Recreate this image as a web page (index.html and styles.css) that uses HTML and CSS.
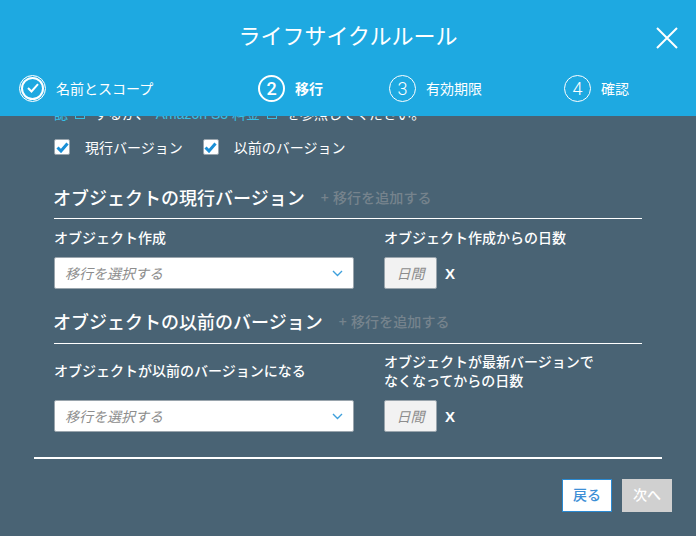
FILE: index.html
```html
<!DOCTYPE html>
<html lang="ja">

<head>
    <meta charset="UTF-8">
    <title>ライフサイクルルール</title>
    <link rel="stylesheet" href="styles.css">
</head>

<body>
    <div class="modal">
        <!-- ヘッダー -->
        <div class="header">
            <div class="title">ライフサイクルルール</div>
            <svg class="close" width="22" height="22" viewBox="0 0 22 22">
                <path d="M1 1L21 21M21 1L1 21" stroke="#fff" stroke-width="2" fill="none" />
            </svg>
            <div class="steps">
                <div class="step">
                    <span class="circle done">
                        <svg width="12" height="10" viewBox="0 0 12 10">
                            <path d="M1 5L4.5 8.5L11 1.2" stroke="#fff" stroke-width="2" fill="none" />
                        </svg>
                    </span>
                    <span class="step-label">名前とスコープ</span>
                </div>
                <div class="step active">
                    <span class="circle">2</span>
                    <span class="step-label">移行</span>
                </div>
                <div class="step">
                    <span class="circle">3</span>
                    <span class="step-label">有効期限</span>
                </div>
                <div class="step">
                    <span class="circle">4</span>
                    <span class="step-label">確認</span>
                </div>
            </div>
        </div>

        <div class="content">
            <p class="note"><a>認<i class="ext"></i></a><span class="note-text">するか、</span><a>Amazon S3 料金<i class="ext"></i></a><span class="note-text">を参照してください。</span></p>

            <div class="checks">
                <label class="check"><span class="box"><svg width="13" height="11" viewBox="0 0 13 11">
                            <path d="M1.5 5.5L5 9L11.5 1.5" stroke="#1a8fd6" stroke-width="3" fill="none" />
                        </svg></span>現行バージョン</label>
                <label class="check"><span class="box"><svg width="13" height="11" viewBox="0 0 13 11">
                            <path d="M1.5 5.5L5 9L11.5 1.5" stroke="#1a8fd6" stroke-width="3" fill="none" />
                        </svg></span>以前のバージョン</label>
            </div>

            <!-- 現行バージョン -->
            <div class="section-head first">
                <h2 class="section-title">オブジェクトの現行バージョン</h2>
                <span class="add-link">+ 移行を追加する</span>
            </div>
            <div class="fields fields-top">
                <div class="field-label">オブジェクト作成</div>
                <div class="field-label">オブジェクト作成からの日数</div>
                <div class="select">
                    <span>移行を選択する</span>
                    <svg width="11" height="7" viewBox="0 0 11 7">
                        <path d="M1 1L5.5 5.5L10 1" stroke="#3fa0dc" stroke-width="1.4" fill="none" />
                    </svg>
                </div>
                <div class="days-row">
                    <div class="days">日間</div>
                    <span class="remove">X</span>
                </div>
            </div>

            <!-- 以前のバージョン -->
            <div class="section-head">
                <h2 class="section-title">オブジェクトの以前のバージョン</h2>
                <span class="add-link">+ 移行を追加する</span>
            </div>
            <div class="fields fields-bottom">
                <div class="field-label label-single">オブジェクトが以前のバージョンになる</div>
                <div class="field-label">オブジェクトが最新バージョンで<br>なくなってからの日数</div>
                <div class="select">
                    <span>移行を選択する</span>
                    <svg width="11" height="7" viewBox="0 0 11 7">
                        <path d="M1 1L5.5 5.5L10 1" stroke="#3fa0dc" stroke-width="1.4" fill="none" />
                    </svg>
                </div>
                <div class="days-row">
                    <div class="days">日間</div>
                    <span class="remove">X</span>
                </div>
            </div>
        </div>

        <!-- フッター -->
        <div class="footer">
            <button class="button back-button">戻る</button>
            <button class="button next-button">次へ</button>
        </div>
    </div>
</body>

</html>
```

FILE: styles.css
```css
* {
    margin: 0;
    padding: 0;
    box-sizing: border-box;
    font-family: "Noto Sans CJK JP", "Liberation Sans", sans-serif;
}

body {
    width: 696px;
    height: 536px;
    overflow: hidden;
    background-color: #496374;
}

.modal {
    height: 536px;
    overflow: hidden;
    color: #fff;
}

.header {
    position: relative;
    z-index: 2;
    height: 116px;
    background-color: #1ea9e1;
}

.title {
    padding-top: 18px;
    height: 74px;
    font-size: 22px;
    line-height: 32px;
    text-align: center;
}

.close {
    position: absolute;
    top: 27px;
    right: 18px;
}

.steps {
    display: grid;
    grid-template-columns: 239px 131px 175px auto;
    padding-left: 19px;
}

.step {
    display: flex;
    align-items: center;
    height: 28px;
    font-size: 14px;
}

.circle {
    display: flex;
    width: 27px;
    height: 27px;
    margin-right: 10px;
    align-items: center;
    justify-content: center;
    border: 1px solid #fff;
    border-radius: 50%;
    font-size: 18px;
    font-family: "Roboto", "Liberation Sans", sans-serif;
    font-weight: 300;
}

.active .circle {
    border-width: 2px;
    font-weight: 500;
}

.active .step-label {
    font-weight: 700;
}

.done {
    box-shadow: inset 0 0 0 1px #1ea9e1, inset 0 0 0 3px #fff;
}

.content {
    padding: 0 54px;
}

.note {
    margin-top: -13px;
    font-size: 14px;
    line-height: 20px;
    white-space: nowrap;
}

.note a {
    color: #35c0e8;
    font-family: "Liberation Sans", "Noto Sans CJK JP", sans-serif;
}

.note-text {
    margin: 0 6px 0 9px;
}

.ext {
    display: inline-block;
    width: 10px;
    height: 9px;
    margin-left: 7px;
    border: 1px solid #35c0e8;
}

.checks {
    display: flex;
    margin-top: 13px;
    height: 20px;
    align-items: center;
}

.check {
    display: flex;
    align-items: center;
    margin-right: 20px;
    font-size: 14px;
}

.box {
    display: flex;
    width: 16px;
    height: 16px;
    margin-right: 15px;
    align-items: center;
    justify-content: center;
    background-color: #fff;
    border: 1px solid #9aa5ad;
    border-radius: 2px;
}

.section-head {
    display: flex;
    height: 38px;
    margin-top: 17px;
    align-items: center;
    border-bottom: 1px solid #fff;
    padding-bottom: 7px;
}

.section-head.first {
    height: 37px;
    margin-top: 25px;
}

.section-title {
    margin: 0 16px 0 -1px;
    font-size: 18px;
    line-height: 24px;
    font-weight: 500;
}

.add-link {
    font-size: 14px;
    color: #76838d;
    font-weight: 500;
    word-spacing: 1px;
    letter-spacing: 0.1px;
}

.fields {
    display: grid;
    grid-template-columns: 300px 1fr;
    column-gap: 30px;
    align-items: center;
}

.fields-top {
    grid-template-rows: 38px 32px;
}

.fields-top .field-label {
    padding-bottom: 2px;
}

.fields-bottom {
    grid-template-rows: 56px 32px;
}

.fields-bottom .field-label {
    padding-bottom: 2px;
}

.fields-bottom .label-single {
    padding-bottom: 4px;
}

.field-label {
    font-size: 14px;
    line-height: 19px;
    font-weight: 500;
}

.select {
    display: flex;
    height: 32px;
    padding: 0 10px;
    align-items: center;
    justify-content: space-between;
    background-color: #fff;
    border: 1px solid #9aa5ad;
    border-radius: 2px;
    color: #8d8d8d;
    font-size: 14px;
    font-style: italic;
}

.days-row {
    display: flex;
    align-items: center;
}

.days {
    width: 53px;
    height: 32px;
    line-height: 30px;
    text-align: center;
    background-color: #f2f2f2;
    border: 1px solid #9aa5ad;
    border-radius: 2px;
    color: #8d8d8d;
    font-size: 14px;
    font-style: italic;
}

.remove {
    margin-left: 8px;
    font-size: 15px;
    font-weight: 700;
    font-family: "Liberation Sans", sans-serif;
}

.footer {
    display: flex;
    margin: 25px 34px 0;
    padding-top: 20px;
    justify-content: flex-end;
    gap: 10px;
    border-top: 2px solid #fff;
}

.button {
    width: 50px;
    height: 33px;
    padding-bottom: 3px;
    border: none;
    font-size: 14px;
    font-weight: 500;
}

.back-button {
    background-color: #fff;
    color: #3d8fd6;
    border: 1px solid #2a8ad2;
}

.next-button {
    background-color: #d0d0d0;
    color: #fff;
    margin-right: -10px;
}
```
